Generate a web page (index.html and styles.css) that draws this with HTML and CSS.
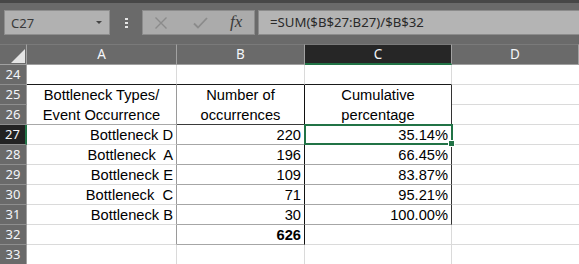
FILE: index.html
```html
<!DOCTYPE html>
<html>
<head>
<meta charset="utf-8">
<link rel="stylesheet" href="styles.css">
</head>
<body>
<div class="app">
  <div class="topstrip"></div>
  <div class="fbar">
    <div class="namebox"><span class="nb-text">C27</span><span class="nb-arrow"></span></div>
    <div class="dots"><i></i><i></i><i></i></div>
    <div class="btns">
      <svg class="ico" width="14" height="12" viewBox="0 0 14 12"><path d="M1.5 0.5 L12.5 11.5 M12.5 0.5 L1.5 11.5" stroke="#8b8b8b" stroke-width="1.4" fill="none"/></svg>
      <svg class="ico" width="15" height="12" viewBox="0 0 15 12"><path d="M1 6.5 L5 10.5 L14 1" stroke="#8b8b8b" stroke-width="1.8" fill="none"/></svg>
      <span class="fx">fx</span>
    </div>
    <div class="formula">=SUM($B$27:B27)/$B$32</div>
  </div>
  <div class="sheet">
    <div class="ch corner"><span class="tri"></span></div>
    <div class="ch">A</div>
    <div class="ch">B</div>
    <div class="ch sel">C</div>
    <div class="ch">D</div>

    <div class="rh">24</div>
    <div class="c a topb"></div>
    <div class="c b topb"></div>
    <div class="c cc topb"></div>
    <div class="c d"></div>

    <div class="rh">25</div>
    <div class="c a hd span2 midv hb-a">Bottleneck Types/<br>Event Occurrence</div>
    <div class="c b hd span2 blk hb">Number of<br>occurrences</div>
    <div class="c cc hd span2 blkr hb">Cumulative<br>percentage</div>
    <div class="c d"></div>

    <div class="rh">26</div>
    <div class="c d"></div>

    <div class="rh rsel">27</div>
    <div class="c a r midv">Bottleneck D</div>
    <div class="c b r blk gb">220</div>
    <div class="c cc r blkr gb active">35.14%</div>
    <div class="c d"></div>

    <div class="rh">28</div>
    <div class="c a r midv">Bottleneck&nbsp; A</div>
    <div class="c b r blk gb">196</div>
    <div class="c cc r blkr gb">66.45%</div>
    <div class="c d"></div>

    <div class="rh">29</div>
    <div class="c a r midv">Bottleneck E</div>
    <div class="c b r blk gb">109</div>
    <div class="c cc r blkr gb">83.87%</div>
    <div class="c d"></div>

    <div class="rh">30</div>
    <div class="c a r midv">Bottleneck&nbsp; C</div>
    <div class="c b r blk gb">71</div>
    <div class="c cc r blkr gb">95.21%</div>
    <div class="c d"></div>

    <div class="rh">31</div>
    <div class="c a r midv">Bottleneck B</div>
    <div class="c b r blk gb">30</div>
    <div class="c cc r blkr gb">100.00%</div>
    <div class="c d"></div>

    <div class="rh">32</div>
    <div class="c a midv"></div>
    <div class="c b r blk gb bold">626</div>
    <div class="c cc"></div>
    <div class="c d"></div>

    <div class="rh">33</div>
    <div class="c a"></div>
    <div class="c b"></div>
    <div class="c cc"></div>
    <div class="c d"></div>
  </div>
</div>
</body>
</html>
```
FILE: styles.css
```css
* { box-sizing: border-box; }
html, body { margin: 0; padding: 0; }
body { width: 579px; height: 264px; overflow: hidden; background: #ffffff; }

.app { width: 579px; height: 264px; overflow: hidden; background: #6a6a6a; }

.topstrip { height: 3px; background: #474747; }

.fbar {
  height: 41px;
  display: flex;
  align-items: flex-start;
  padding-top: 7px;
  padding-left: 4px;
}

.namebox {
  width: 106px;
  height: 25px;
  background: #b1b1b1;
  border: 1px solid #8e8e8e;
  display: flex;
  align-items: center;
  justify-content: space-between;
  padding: 0 7px 0 6px;
}
.nb-text { font-family: "Noto Sans", sans-serif; font-size: 13px; color: #3a3a3a; }
.nb-arrow {
  width: 0; height: 0;
  border-left: 3px solid transparent;
  border-right: 3px solid transparent;
  border-top: 3px solid #444;
}

.dots {
  width: 32px;
  height: 25px;
  display: flex;
  flex-direction: column;
  align-items: center;
  justify-content: center;
  gap: 2px;
}
.dots i { display: block; width: 3px; height: 2px; background: #e6e6e6; }

.btns {
  width: 113px;
  height: 25px;
  background: #ababab;
  border: 1px solid #8c8c8c;
  display: flex;
  align-items: center;
  padding-left: 11px;
  gap: 0;
}
.btns .ico:nth-child(1) { margin-right: 25px; }
.btns .ico:nth-child(2) { margin-right: 22px; }
.fx {
  font-family: "Liberation Serif", serif;
  font-style: italic;
  font-size: 17px;
  color: #3a3a3a;
  line-height: 1;
  margin-top: -2px;
}

.formula {
  margin-left: 3px;
  flex: 1;
  height: 25px;
  background: #b4b4b4;
  border: 1px solid #8c8c8c;
  border-right: none;
  font-family: "Noto Sans", sans-serif;
  font-size: 13.2px;
  color: #2a2a2a;
  line-height: 23px;
  padding-left: 11px;
  white-space: nowrap;
}

.sheet {
  display: grid;
  grid-template-columns: 27px 150px 128px 147px 127px;
  grid-template-rows: 21px repeat(10, 20px);
}

.ch {
  background: #6a6a6a;
  border-top: 1px solid #7a7a7a;
  border-right: 1px solid #a2a2a2;
  border-bottom: 1px solid #a0a0a0;
  color: #f4f6fa;
  font-family: "Noto Sans", sans-serif;
  font-size: 13.5px;
  text-align: center;
  line-height: 19px;
}
.ch:last-child { border-right: none; }
.ch.sel { background: #262626; border-bottom: 2px solid #217346; }
.corner { position: relative; }
.tri {
  position: absolute;
  right: 1px; bottom: 1px;
  width: 0; height: 0;
  border-left: 14px solid transparent;
  border-bottom: 14px solid #e4e4e4;
}

.rh {
  background: #6a6a6a;
  border-right: 1px solid #a0a0a0;
  border-bottom: 1px solid #8e8e8e;
  color: #f4f6fa;
  font-family: "Noto Sans", sans-serif;
  font-size: 13px;
  text-align: center;
  line-height: 19px;
}
.rh.rsel { background: #222222; border-right: 2px solid #217346; }

.c {
  background: #ffffff;
  border-right: 1px solid #dadada;
  border-bottom: 1px solid #dadada;
  font-family: "Liberation Sans", Arial, sans-serif;
  font-size: 14.67px;
  color: #000;
  line-height: 19px;
  white-space: nowrap;
  overflow: visible;
}
.c.d { border-right: none; }
.c.r { text-align: right; padding-right: 3px; padding-top: 1px; }
.c.hd {
  text-align: center;
  line-height: 20px;
  display: flex;
  align-items: center;
  justify-content: center;
}
.span2 { grid-row: span 2; }

.topb { border-bottom-color: #1a1a1a; }
.midv { border-right-color: #9a9a9a; }
.hb-a { border-bottom-color: #a8a8a8; }
.hb { border-bottom-color: #3a3a3a; }
.blk { border-right-color: #111111; }
.blkr { border-right-color: #333333; }
.gb { border-bottom-color: #a6a6a6; }
.bold { font-weight: bold; }

.active { position: relative; }
.active::after {
  content: "";
  position: absolute;
  left: -1px; top: -1px; right: -2px; bottom: -1px;
  border: 2px solid #217346;
}
.active::before {
  content: "";
  position: absolute;
  right: -4px; bottom: -3px;
  width: 5px; height: 5px;
  background: #217346;
  border: 1px solid #ffffff;
  z-index: 2;
}
```
